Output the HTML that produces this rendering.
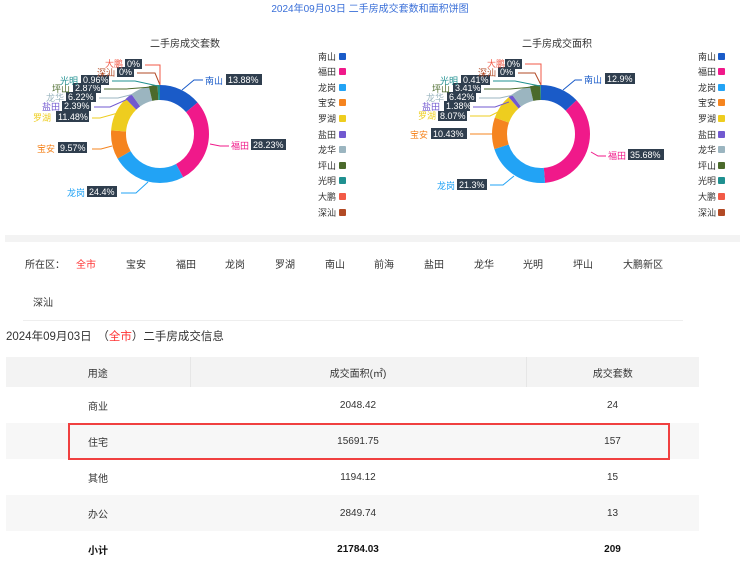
<!DOCTYPE html>
<html><head><meta charset="utf-8"><style>
*{margin:0;padding:0;box-sizing:border-box}
body{width:740px;height:562px;overflow:hidden;background:#fff;font-family:"Liberation Sans","Noto Sans CJK SC",sans-serif;color:#333;position:relative}
.a{position:absolute;white-space:nowrap}
.d{position:absolute;font-size:10px;color:#333;top:256px}
table{position:absolute;left:6px;top:357px;width:693px;border-collapse:collapse;font-size:10px;color:#333}
td{text-align:center;height:36px;padding:0}
tr.h td{height:30px;background:#f3f3f3;border-right:1px solid #e6e6e6}
tr.g td{background:#f7f7f7}
</style></head><body>
<div class="a" style="left:0;width:740px;text-align:center;top:0;font-size:10px;color:#3a6fd8">2024年09月03日 二手房成交套数和面积饼图</div>

<svg class="a" style="left:0;top:0" width="740" height="232" font-family="Liberation Sans,Noto Sans CJK SC,sans-serif" font-size="9">
<text x="185" y="47" text-anchor="middle" font-size="10" fill="#333">二手房成交套数</text>
<text x="557" y="47" text-anchor="middle" font-size="10" fill="#333">二手房成交面积</text>
<g transform="rotate(-90 160 134)" fill="none" stroke-width="15">
<circle cx="160" cy="134" r="41.5" stroke="#1a5bc8" stroke-dasharray="36.19 300" stroke-dashoffset="0"/>
<circle cx="160" cy="134" r="41.5" stroke="#f0198a" stroke-dasharray="73.61 300" stroke-dashoffset="-36.19"/>
<circle cx="160" cy="134" r="41.5" stroke="#22a3f5" stroke-dasharray="63.62 300" stroke-dashoffset="-109.8"/>
<circle cx="160" cy="134" r="41.5" stroke="#f5841f" stroke-dasharray="24.95 300" stroke-dashoffset="-173.42"/>
<circle cx="160" cy="134" r="41.5" stroke="#eecd1f" stroke-dasharray="29.93 300" stroke-dashoffset="-198.38"/>
<circle cx="160" cy="134" r="41.5" stroke="#7159d0" stroke-dasharray="6.23 300" stroke-dashoffset="-228.31"/>
<circle cx="160" cy="134" r="41.5" stroke="#9bb5c0" stroke-dasharray="16.22 300" stroke-dashoffset="-234.54"/>
<circle cx="160" cy="134" r="41.5" stroke="#4b6a2b" stroke-dasharray="7.48 300" stroke-dashoffset="-250.76"/>
<circle cx="160" cy="134" r="41.5" stroke="#1f9090" stroke-dasharray="2.5 300" stroke-dashoffset="-258.24"/>
</g>
<g transform="rotate(-90 541 134)" fill="none" stroke-width="15">
<circle cx="541" cy="134" r="41.5" stroke="#1a5bc8" stroke-dasharray="33.64 300" stroke-dashoffset="0"/>
<circle cx="541" cy="134" r="41.5" stroke="#f0198a" stroke-dasharray="93.04 300" stroke-dashoffset="-33.64"/>
<circle cx="541" cy="134" r="41.5" stroke="#22a3f5" stroke-dasharray="55.54 300" stroke-dashoffset="-126.68"/>
<circle cx="541" cy="134" r="41.5" stroke="#f5841f" stroke-dasharray="27.2 300" stroke-dashoffset="-182.22"/>
<circle cx="541" cy="134" r="41.5" stroke="#eecd1f" stroke-dasharray="21.04 300" stroke-dashoffset="-209.42"/>
<circle cx="541" cy="134" r="41.5" stroke="#7159d0" stroke-dasharray="3.6 300" stroke-dashoffset="-230.46"/>
<circle cx="541" cy="134" r="41.5" stroke="#9bb5c0" stroke-dasharray="16.74 300" stroke-dashoffset="-234.06"/>
<circle cx="541" cy="134" r="41.5" stroke="#4b6a2b" stroke-dasharray="8.89 300" stroke-dashoffset="-250.8"/>
<circle cx="541" cy="134" r="41.5" stroke="#1f9090" stroke-dasharray="1.07 300" stroke-dashoffset="-259.69"/>
</g>
<!-- leader lines chart1 -->
<g fill="none" stroke-width="1">
<polyline points="182,90 194,80 203,80" stroke="#1a5bc8"/>
<polyline points="210,144 220,146 229,146" stroke="#f0198a"/>
<polyline points="148,182 136,193 121,193" stroke="#22a3f5"/>
<polyline points="112,146 101,149 92,149" stroke="#f5841f"/>
<polyline points="118,113 100,118 92,118" stroke="#eecd1f"/>
<polyline points="128,99 110,107 94,107" stroke="#7159d0"/>
<polyline points="138,93 118,98 99,98" stroke="#9bb5c0"/>
<polyline points="152,87 126,89 104,89" stroke="#4b6a2b"/>
<polyline points="158,86 135,81 112,81" stroke="#1f9090"/>
<polyline points="160,85 155,73 137,73" stroke="#b24a25"/>
<polyline points="160,85 160,65 145,65" stroke="#f25a47"/>
<polyline points="563,90 575,80 582,80" stroke="#1a5bc8"/>
<polyline points="591,152 598,156 606,156" stroke="#f0198a"/>
<polyline points="514,176 503,185 490,185" stroke="#22a3f5"/>
<polyline points="492,134 480,134 470,134" stroke="#f5841f"/>
<polyline points="502,110 490,116 470,116" stroke="#eecd1f"/>
<polyline points="509,102 495,107 473,107" stroke="#7159d0"/>
<polyline points="518,94 500,98 479,98" stroke="#9bb5c0"/>
<polyline points="533,87 510,89 484,89" stroke="#4b6a2b"/>
<polyline points="540,86 515,81 493,81" stroke="#1f9090"/>
<polyline points="541,85 535,73 518,73" stroke="#b24a25"/>
<polyline points="541,85 541,64 525,64" stroke="#f25a47"/>
</g>
<!-- labels chart1 -->
<g>
<text x="205" y="84" fill="#1a5bc8">南山</text><rect x="226" y="74" width="36" height="11" fill="#2f3e4e"/><text x="228" y="83" fill="#fff">13.88%</text>
<text x="231" y="149" fill="#f0198a">福田</text><rect x="251" y="139" width="35" height="11" fill="#2f3e4e"/><text x="253" y="148" fill="#fff">28.23%</text>
<text x="67" y="196" fill="#22a3f5">龙岗</text><rect x="87" y="186" width="30" height="11" fill="#2f3e4e"/><text x="89" y="195" fill="#fff">24.4%</text>
<text x="37" y="152" fill="#f5841f">宝安</text><rect x="58" y="142" width="29" height="11" fill="#2f3e4e"/><text x="60" y="151" fill="#fff">9.57%</text>
<text x="33" y="121" fill="#eecd1f">罗湖</text><rect x="56" y="111" width="33" height="11" fill="#2f3e4e"/><text x="58" y="120" fill="#fff">11.48%</text>
<text x="42" y="110" fill="#7159d0">盐田</text><rect x="62" y="101" width="29" height="10" fill="#2f3e4e"/><text x="64" y="109" fill="#fff">2.39%</text>
<text x="46" y="101" fill="#9bb5c0">龙华</text><rect x="66" y="92" width="30" height="10" fill="#2f3e4e"/><text x="68" y="100" fill="#fff">6.22%</text>
<text x="52" y="92" fill="#4b6a2b">坪山</text><rect x="73" y="83" width="28" height="10" fill="#2f3e4e"/><text x="75" y="91" fill="#fff">2.87%</text>
<text x="60" y="84" fill="#1f9090">光明</text><rect x="81" y="75" width="28" height="10" fill="#2f3e4e"/><text x="83" y="83" fill="#fff">0.96%</text>
<text x="97" y="76" fill="#b24a25">深汕</text><rect x="117" y="67" width="17" height="10" fill="#2f3e4e"/><text x="119" y="75" fill="#fff">0%</text>
<text x="105" y="67" fill="#f25a47">大鹏</text><rect x="125" y="59" width="17" height="10" fill="#2f3e4e"/><text x="127" y="67" fill="#fff">0%</text>
</g>
<g>
<text x="584" y="83" fill="#1a5bc8">南山</text><rect x="605" y="73" width="30" height="11" fill="#2f3e4e"/><text x="607" y="82" fill="#fff">12.9%</text>
<text x="608" y="159" fill="#f0198a">福田</text><rect x="628" y="149" width="36" height="11" fill="#2f3e4e"/><text x="630" y="158" fill="#fff">35.68%</text>
<text x="437" y="189" fill="#22a3f5">龙岗</text><rect x="457" y="179" width="30" height="11" fill="#2f3e4e"/><text x="459" y="188" fill="#fff">21.3%</text>
<text x="410" y="138" fill="#f5841f">宝安</text><rect x="431" y="128" width="36" height="11" fill="#2f3e4e"/><text x="433" y="137" fill="#fff">10.43%</text>
<text x="418" y="119" fill="#eecd1f">罗湖</text><rect x="438" y="111" width="29" height="10" fill="#2f3e4e"/><text x="440" y="119" fill="#fff">8.07%</text>
<text x="422" y="110" fill="#7159d0">盐田</text><rect x="444" y="101" width="26" height="10" fill="#2f3e4e"/><text x="446" y="109" fill="#fff">1.38%</text>
<text x="426" y="101" fill="#9bb5c0">龙华</text><rect x="447" y="92" width="29" height="10" fill="#2f3e4e"/><text x="449" y="100" fill="#fff">6.42%</text>
<text x="432" y="92" fill="#4b6a2b">坪山</text><rect x="453" y="83" width="28" height="10" fill="#2f3e4e"/><text x="455" y="91" fill="#fff">3.41%</text>
<text x="440" y="84" fill="#1f9090">光明</text><rect x="461" y="75" width="29" height="10" fill="#2f3e4e"/><text x="463" y="83" fill="#fff">0.41%</text>
<text x="478" y="76" fill="#b24a25">深汕</text><rect x="498" y="67" width="17" height="10" fill="#2f3e4e"/><text x="500" y="75" fill="#fff">0%</text>
<text x="487" y="67" fill="#f25a47">大鹏</text><rect x="505" y="59" width="17" height="10" fill="#2f3e4e"/><text x="507" y="67" fill="#fff">0%</text>
</g>
<!-- legends -->
<g fill="#333">
<text x="318" y="60">南山</text><rect x="339" y="53" width="7" height="7" rx="1" fill="#1a5bc8"/>
<text x="318" y="75">福田</text><rect x="339" y="68" width="7" height="7" rx="1" fill="#f0198a"/>
<text x="318" y="91">龙岗</text><rect x="339" y="84" width="7" height="7" rx="1" fill="#22a3f5"/>
<text x="318" y="106">宝安</text><rect x="339" y="99" width="7" height="7" rx="1" fill="#f5841f"/>
<text x="318" y="122">罗湖</text><rect x="339" y="115" width="7" height="7" rx="1" fill="#eecd1f"/>
<text x="318" y="138">盐田</text><rect x="339" y="131" width="7" height="7" rx="1" fill="#7159d0"/>
<text x="318" y="153">龙华</text><rect x="339" y="146" width="7" height="7" rx="1" fill="#9bb5c0"/>
<text x="318" y="169">坪山</text><rect x="339" y="162" width="7" height="7" rx="1" fill="#4b6a2b"/>
<text x="318" y="184">光明</text><rect x="339" y="177" width="7" height="7" rx="1" fill="#1f9090"/>
<text x="318" y="200">大鹏</text><rect x="339" y="193" width="7" height="7" rx="1" fill="#f25a47"/>
<text x="318" y="216">深汕</text><rect x="339" y="209" width="7" height="7" rx="1" fill="#b24a25"/>
<text x="698" y="60">南山</text><rect x="718" y="53" width="7" height="7" rx="1" fill="#1a5bc8"/>
<text x="698" y="75">福田</text><rect x="718" y="68" width="7" height="7" rx="1" fill="#f0198a"/>
<text x="698" y="91">龙岗</text><rect x="718" y="84" width="7" height="7" rx="1" fill="#22a3f5"/>
<text x="698" y="106">宝安</text><rect x="718" y="99" width="7" height="7" rx="1" fill="#f5841f"/>
<text x="698" y="122">罗湖</text><rect x="718" y="115" width="7" height="7" rx="1" fill="#eecd1f"/>
<text x="698" y="138">盐田</text><rect x="718" y="131" width="7" height="7" rx="1" fill="#7159d0"/>
<text x="698" y="153">龙华</text><rect x="718" y="146" width="7" height="7" rx="1" fill="#9bb5c0"/>
<text x="698" y="169">坪山</text><rect x="718" y="162" width="7" height="7" rx="1" fill="#4b6a2b"/>
<text x="698" y="184">光明</text><rect x="718" y="177" width="7" height="7" rx="1" fill="#1f9090"/>
<text x="698" y="200">大鹏</text><rect x="718" y="193" width="7" height="7" rx="1" fill="#f25a47"/>
<text x="698" y="216">深汕</text><rect x="718" y="209" width="7" height="7" rx="1" fill="#b24a25"/>
</g>
</svg>

<div class="a" style="left:5px;top:235px;width:735px;height:7px;background:#f3f3f3"></div>
<div class="d" style="left:25px">所在区：</div>
<div class="d" style="left:76px;color:#f33">全市</div>
<div class="d" style="left:126px">宝安</div>
<div class="d" style="left:176px">福田</div>
<div class="d" style="left:225px">龙岗</div>
<div class="d" style="left:275px">罗湖</div>
<div class="d" style="left:325px">南山</div>
<div class="d" style="left:374px">前海</div>
<div class="d" style="left:424px">盐田</div>
<div class="d" style="left:474px">龙华</div>
<div class="d" style="left:523px">光明</div>
<div class="d" style="left:573px">坪山</div>
<div class="d" style="left:623px">大鹏新区</div>
<div class="d" style="left:33px;top:294px">深汕</div>
<div class="a" style="left:23px;top:320px;width:660px;height:1px;background:#eee"></div>
<div class="a" style="left:6px;top:328px;font-size:11.5px;color:#333">2024年09月03日　（<span style="color:#f33">全市</span>）二手房成交信息</div>

<table>
<tr class="h"><td style="width:184px">用途</td><td style="width:336px">成交面积(㎡)</td><td style="border-right:none">成交套数</td></tr>
<tr><td>商业</td><td>2048.42</td><td>24</td></tr>
<tr class="g"><td>住宅</td><td>15691.75</td><td>157</td></tr>
<tr><td>其他</td><td>1194.12</td><td>15</td></tr>
<tr class="g"><td>办公</td><td>2849.74</td><td>13</td></tr>
<tr style="font-weight:bold;color:#111"><td>小计</td><td>21784.03</td><td>209</td></tr>
</table>
<div class="a" style="left:68px;top:423px;width:602px;height:37px;border:2px solid #f04040"></div>
</body></html>
